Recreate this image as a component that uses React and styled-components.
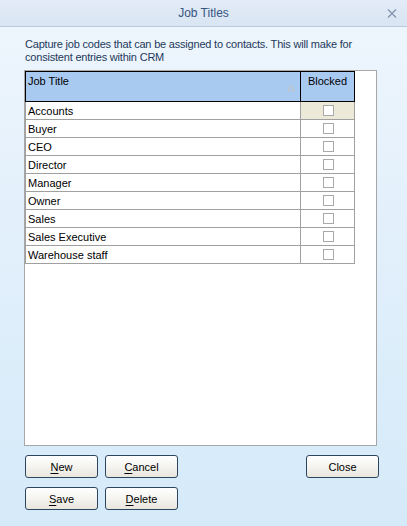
import styled, { createGlobalStyle } from 'styled-components';

const GlobalStyle = createGlobalStyle`
  html, body {
    margin: 0;
    padding: 0;
  }
  body {
    font-family: "Liberation Sans", Arial, sans-serif;
    font-size: 11px;
  }
`;

const Window = styled.div`
  width: 407px;
  height: 526px;
  display: flex;
  flex-direction: column;
  overflow: hidden;
  background: linear-gradient(to bottom, #eff6fd 0%, #e3f0fb 40%, #d5eaf9 100%);
`;

const TitleBar = styled.div`
  position: relative;
  height: 27px;
  flex-shrink: 0;
  display: flex;
  align-items: center;
  justify-content: center;
  background: linear-gradient(to bottom, #e2ebf6, #d9e5f3);
  border-bottom: 1px solid #b8cbe1;
  box-sizing: border-box;
`;

const Title = styled.span`
  font-size: 12px;
  color: #36557f;
  margin-top: -1px;
`;

const CloseIcon = styled.svg`
  position: absolute;
  right: 10px;
  top: 9px;
`;

const Body = styled.div`
  flex: 1;
  display: flex;
  flex-direction: column;
  padding: 11px 30px 0 24px;
`;

const Description = styled.p`
  margin: 0 0 6px 1px;
  line-height: 13px;
  color: #1e395b;
  letter-spacing: -0.2px;
`;

const Grid = styled.div`
  width: 353px;
  height: 376px;
  box-sizing: border-box;
  border: 1px solid #a7a7a7;
  background: #fff;
`;

const HeaderRow = styled.div`
  display: flex;
  width: 330px;
  height: 31px;
  box-sizing: border-box;
  border: 1px solid #000;
  background: #a9caf0;
`;

const HeaderCell = styled.div`
  position: relative;
  box-sizing: border-box;
  width: ${(p) => (p.$width ? `${p.$width}px` : 'auto')};
  flex: ${(p) => (p.$width ? 'none' : 1)};
  border-right: ${(p) => (p.$divider ? '1px solid #000' : 'none')};
  padding: 3px 2px 0;
  text-align: ${(p) => (p.$center ? 'center' : 'left')};
  color: #000;
`;

const SortGlyph = styled.svg`
  position: absolute;
  right: 5px;
  top: 12px;
`;

const Row = styled.div`
  display: flex;
  width: 330px;
  height: 18px;
  box-sizing: border-box;
  border-left: 1px solid #a0a0a0;
  border-right: 1px solid #a0a0a0;
  border-bottom: 1px solid #a0a0a0;
`;

const Cell = styled.div`
  box-sizing: border-box;
  width: 275px;
  border-right: 1px solid #a0a0a0;
  padding-left: 2px;
  display: flex;
  align-items: center;
  color: #000;
`;

const CheckCell = styled.div`
  flex: 1;
  display: flex;
  align-items: center;
  justify-content: center;
  background: ${(p) => (p.$active ? '#ece9d8' : '#fff')};
  padding-left: 1px;
`;

const Checkbox = styled.span`
  width: 11px;
  height: 11px;
  box-sizing: border-box;
  border: 1px solid #a9a9a9;
  background: #fff;
`;

const Buttons = styled.div`
  display: grid;
  grid-template-columns: 73px 73px 1fr 73px;
  grid-template-rows: 23px 23px;
  column-gap: 7px;
  row-gap: 9px;
  width: 354px;
  margin: 9px 0 0 1px;
`;

const Button = styled.button`
  grid-column: ${(p) => p.$col};
  grid-row: ${(p) => p.$row};
  box-sizing: border-box;
  height: 23px;
  padding: 0;
  border: 1px solid #2c4661;
  border-radius: 3px;
  background: linear-gradient(to bottom, #ffffff 0%, #f5f4f0 50%, #e8e6dd 100%);
  font-family: "Liberation Sans", Arial, sans-serif;
  font-size: 11px;
  color: #000;
  cursor: pointer;

  u {
    text-decoration: underline;
    text-underline-offset: 2px;
  }
`;

const jobTitles = [
  'Accounts',
  'Buyer',
  'CEO',
  'Director',
  'Manager',
  'Owner',
  'Sales',
  'Sales Executive',
  'Warehouse staff',
];

export default function App() {
  return (
    <>
      <GlobalStyle />
      <Window>
        <TitleBar>
          <Title>Job Titles</Title>
          <CloseIcon width="10" height="9" viewBox="0 0 10 9">
            <path d="M1 0.5 L9 8.5 M9 0.5 L1 8.5" stroke="#7d90aa" strokeWidth="1.1" fill="none" />
          </CloseIcon>
        </TitleBar>
        <Body>
          <Description>
            Capture job codes that can be assigned to contacts. This will make for
            consistent entries within CRM
          </Description>
          <Grid>
            <HeaderRow>
              <HeaderCell $width={275} $divider>
                Job Title
                <SortGlyph width="8" height="7" viewBox="0 0 8 7">
                  <path d="M4 0.8 L7.3 6.3 L0.7 6.3 Z" stroke="#c3c3c3" fill="none" strokeWidth="1" />
                </SortGlyph>
              </HeaderCell>
              <HeaderCell $center>Blocked</HeaderCell>
            </HeaderRow>
            {jobTitles.map((title, index) => (
              <Row key={title}>
                <Cell>{title}</Cell>
                <CheckCell $active={index === 0}>
                  <Checkbox />
                </CheckCell>
              </Row>
            ))}
          </Grid>
          <Buttons>
            <Button $col={1} $row={1}><u>N</u>ew</Button>
            <Button $col={2} $row={1}><u>C</u>ancel</Button>
            <Button $col={4} $row={1}>Close</Button>
            <Button $col={1} $row={2}><u>S</u>ave</Button>
            <Button $col={2} $row={2}><u>D</u>elete</Button>
          </Buttons>
        </Body>
      </Window>
    </>
  );
}
